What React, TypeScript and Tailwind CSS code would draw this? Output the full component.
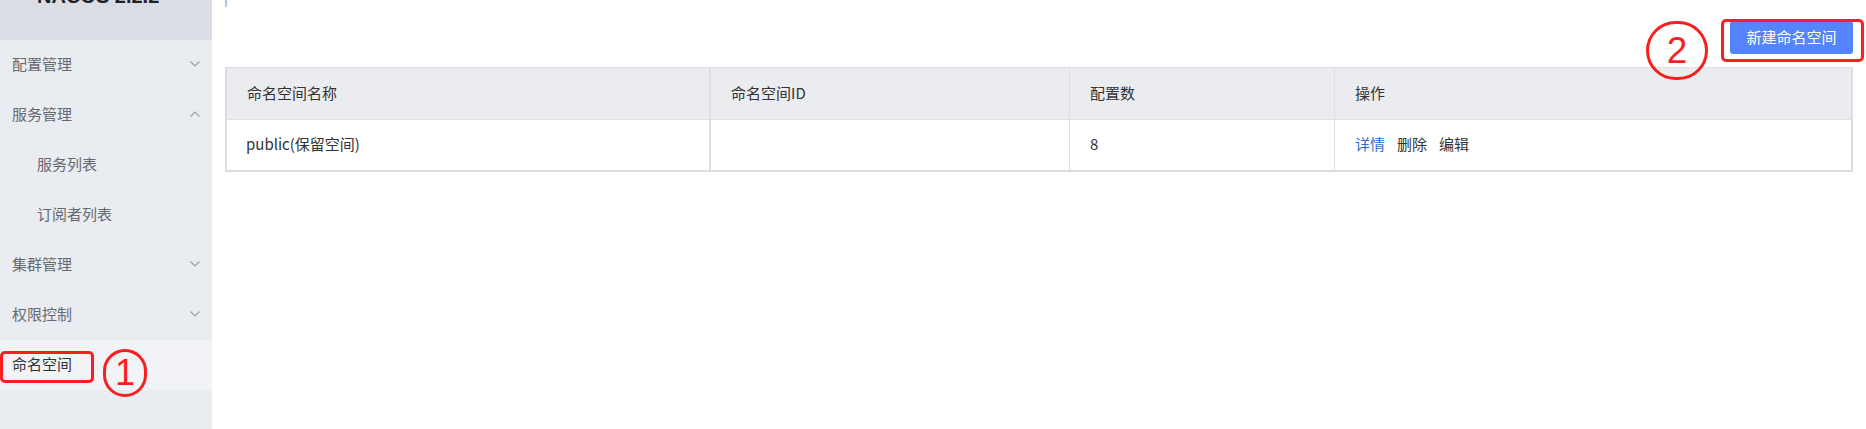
import React from 'react'

type MenuItem = {
  label: string
  sub?: boolean
  chevron?: 'up' | 'down'
  active?: boolean
}

const menu: MenuItem[] = [
  { label: '配置管理', chevron: 'down' },
  { label: '服务管理', chevron: 'up' },
  { label: '服务列表', sub: true },
  { label: '订阅者列表', sub: true },
  { label: '集群管理', chevron: 'down' },
  { label: '权限控制', chevron: 'down' },
  { label: '命名空间', active: true },
]

const Chevron = ({ dir }: { dir: 'up' | 'down' }) => (
  <svg width="10" height="6" viewBox="0 0 10 6" className="ml-auto">
    <path
      d={dir === 'down' ? 'M0.5 0.5 L5 5 L9.5 0.5' : 'M0.5 5.5 L5 1 L9.5 5.5'}
      fill="none"
      stroke="#9aa0a8"
      strokeWidth="1.1"
    />
  </svg>
)

const Sidebar = () => (
  <aside className="w-[212px] shrink-0 bg-[#e9ecf1] h-full">
    <div className="h-[40px] bg-[#d9dde4] overflow-hidden pl-[37px]">
      <div className="mt-[-14px] font-['Liberation_Sans',sans-serif] font-bold text-[20px] leading-[20px] text-[#1f2329]">
        NACOS 2.2.2
      </div>
    </div>
    <ul>
      {menu.map(item => (
        <li
          key={item.label}
          className={
            'h-[50px] flex items-center pr-[12px] pb-[3px] text-[15px] leading-none ' +
            (item.sub ? 'pl-[37px] ' : 'pl-[12px] ') +
            (item.active ? 'bg-[#f1f3f6] text-[#333333]' : 'text-[#666a70]')
          }
        >
          <span>{item.label}</span>
          {item.chevron && <Chevron dir={item.chevron} />}
        </li>
      ))}
    </ul>
  </aside>
)

const cols = ['命名空间名称', '命名空间ID', '配置数', '操作']

const NamespaceTable = () => (
  <div className="mt-[13px] border-x-2 border-b-2 border-t border-[#dcdee3] text-[15px] leading-none text-[#333333]">
    <div className="grid grid-cols-[484px_359px_265px_1fr] bg-[#ebecf0] border-b border-[#dcdee3] h-[52px]">
      {cols.map((c, i) => (
        <div
          key={c}
          className={
            'flex items-center px-5 pb-[3px] ' +
            (i === 0 ? 'border-r-2 border-[#dcdee3]' : i < 3 ? 'border-r border-[#dcdee3]' : '')
          }
        >
          {c}
        </div>
      ))}
    </div>
    <div className="grid grid-cols-[484px_359px_265px_1fr] bg-white h-[50px]">
      <div className="flex items-center pl-[19px] pb-[3px] border-r-2 border-[#dcdee3]">public(保留空间)</div>
      <div className="border-r border-[#dcdee3]"></div>
      <div className="flex items-center px-5 pb-[3px] border-r border-[#dcdee3]">8</div>
      <div className="flex items-center gap-3 px-5 pb-[3px]">
        <a className="text-[#1f6fd6] cursor-pointer">详情</a>
        <a className="cursor-pointer">删除</a>
        <a className="cursor-pointer">编辑</a>
      </div>
    </div>
  </div>
)

export default function App() {
  return (
    <div className="relative w-[1866px] h-[429px] flex bg-white overflow-hidden font-['Noto_Sans_CJK_SC','Noto_Sans',sans-serif]">
      <Sidebar />
      <main className="flex-1 px-[13px]">
        <div className="w-[2px] h-[7px] bg-[#a7c6ec]"></div>
        <div className="mt-[14px] flex justify-end">
          <button className="h-[33px] w-[123px] pb-[2px] rounded-[3px] bg-[#5584ff] text-white text-[15px] leading-none">
            新建命名空间
          </button>
        </div>
        <NamespaceTable />
      </main>

      {/* annotations */}
      <div className="absolute left-0 top-[351px] w-[94px] h-[32px] border-[3px] border-[#fa1e1e] rounded-[5px]"></div>
      <div className="absolute left-[103px] top-[349px] w-[44px] h-[48px] border-[3px] border-[#fa1e1e] rounded-full flex items-center justify-center text-[#fa1e1e] text-[36px] leading-none font-['Liberation_Sans',sans-serif]">
        1
      </div>
      <div className="absolute left-[1721px] top-[19px] w-[143px] h-[43px] border-[3px] border-[#fa1e1e] rounded-[5px]"></div>
      <div className="absolute left-[1646px] top-[21px] w-[62px] h-[59px] border-[3px] border-[#fa1e1e] rounded-full flex items-center justify-center text-[#fa1e1e] text-[37px] leading-none font-['Liberation_Sans',sans-serif]">
        2
      </div>
    </div>
  )
}
